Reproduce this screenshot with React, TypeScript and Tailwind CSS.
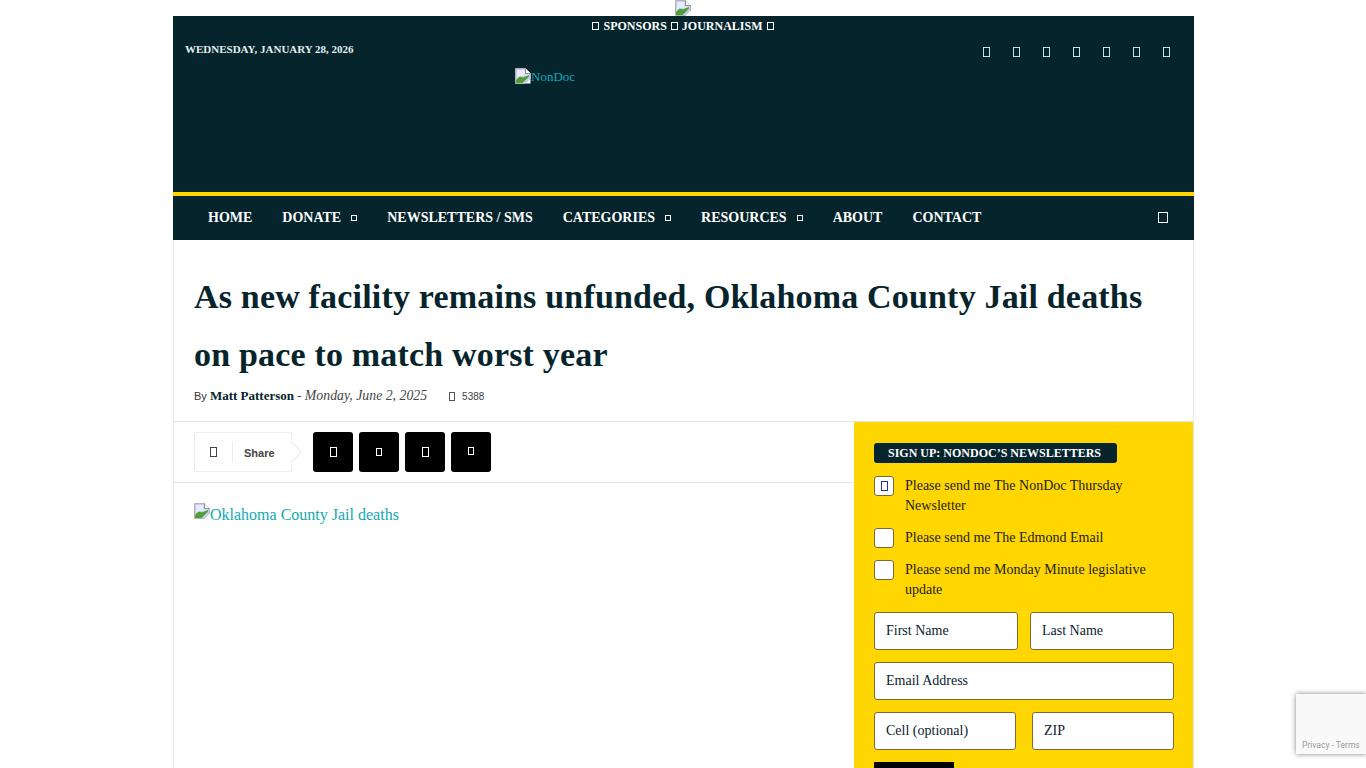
// icon fonts never loaded in the reference, so every icon is an empty box
const Tofu = ({ className = '' }: { className?: string }) => <span className={`inline-block shrink-0 border border-current ${className}`} />;

// the browser's broken-image picture
const BrokenImage = () => (
  <svg width="16" height="16" viewBox="0 0 16 16" className="inline-block shrink-0 align-baseline">
    <path d="M0.5 0.5H10.5L15.5 5.5V10.5L10.5 15.5H0.5Z" fill="#c3cbf0" stroke="#b4b4b4" />
    <path d="M2 2H9.5V6.5H14V7.5L7 8L2 10Z" fill="#e8ebfb" />
    <path d="M10.5 0.5V5.5H15.5" fill="#fff" stroke="#8f8f8f" />
    <path d="M1 15V12L4.5 8.5L8 9.5L14 7V8.5L7.5 15Z" fill="#4f9f32" />
    <path d="M10.5 15.5L15.5 10.5V15.5Z" fill="#fff" />
  </svg>
);

const navItems = [
  { label: 'HOME' },
  { label: 'DONATE', caret: true },
  { label: 'NEWSLETTERS / SMS' },
  { label: 'CATEGORIES', caret: true },
  { label: 'RESOURCES', caret: true },
  { label: 'ABOUT' },
  { label: 'CONTACT' },
];

const checks = [
  { label: 'Please send me The NonDoc Thursday Newsletter', checked: true },
  { label: 'Please send me The Edmond Email' },
  { label: 'Please send me Monday Minute legislative update' },
];

const shareIcons = [
  'h-[10px] w-[7px]',
  'h-[8px] w-[6px]',
  'h-[10px] w-[7px]',
  'mb-[3px] h-[8px] w-[6px]',
];

const Field = ({ label, className = '' }: { label: string; className?: string }) => (
  <div className={`flex h-[38px] items-center rounded-[3px] border border-[#7d6a35] bg-white px-[11px] text-[14px] text-[#0b1a30] ${className}`}>
    {label}
  </div>
);

export default function App() {
  return (
    <div className="relative h-screen overflow-hidden bg-white font-['Liberation_Serif',serif]">
      <div className="ml-[173px] w-[1021px]">
        <div className="flex h-4 justify-center overflow-hidden pr-px">
          <BrokenImage />
        </div>

        <header className="h-[176px] bg-[#05242c] text-white">
          <div className="flex h-[20px] items-center justify-center gap-[4px] pr-px text-[12px] font-bold">
            <Tofu className="h-[8px] w-[7px]" />
            <span>SPONSORS</span>
            <Tofu className="h-[8px] w-[7px]" />
            <span>JOURNALISM</span>
            <Tofu className="h-[8px] w-[7px]" />
          </div>
          <div className="flex items-start pl-3">
            <div className="w-[330px] pt-[5px] text-[11px] leading-[16px] font-bold text-[#e4eef0]">WEDNESDAY, JANUARY 28, 2026</div>
            <div className="flex pt-[32px] text-[13px] leading-[16px] text-[#12a9b5]">
              <BrokenImage />
              <span className="pt-[1px]">NonDoc</span>
            </div>
            <div className="ml-auto flex gap-[23px] pt-[11px] pr-[24px] text-[#cfe0e3]">
              {[0, 1, 2, 3, 4, 5, 6].map((i) => (
                <Tofu key={i} className="h-[10px] w-[7px]" />
              ))}
            </div>
          </div>
        </header>

        <nav className="flex h-[48px] items-center border-t-4 border-[#ffd600] bg-[#05242c] pr-[26px] pl-[35px] text-white">
          <ul className="flex gap-[30px] pb-[2px] text-[14px] font-bold">
            {navItems.map((item) => (
              <li key={item.label} className="flex items-center">
                {item.label}
                {item.caret && <Tofu className="mt-[2px] ml-[10px] h-[6px] w-[6px]" />}
              </li>
            ))}
          </ul>
          <Tofu className="mb-px ml-auto h-[11px] w-[10px]" />
        </nav>

        <main className="border-x border-[#e7e7e7]">
          <div className="border-b border-[#e7e7e7] px-5 pt-[28px] pb-[15px]">
            <h1 className="text-[34px] leading-[58px] font-bold tracking-[0.18px] text-[#05242c]">
              As new facility remains unfunded, Oklahoma County Jail deaths on pace to match worst year
            </h1>
            <div className="mt-[2px] flex h-[20px] items-center text-[13px] text-[#333]">
              <span className="font-['Liberation_Sans',sans-serif] text-[11px]">By&nbsp;</span>
              <span className="font-bold text-[#05242c]">Matt Patterson</span>
              <span>&nbsp;-&nbsp;</span>
              <span className="text-[13.8px] text-[#444] italic">Monday, June 2, 2025</span>
              <Tofu className="ml-[22px] h-[9px] w-[6px] text-[#555]" />
              <span className="ml-[7px] font-['Liberation_Sans',sans-serif] text-[10px] text-[#444]">5388</span>
            </div>
          </div>

          <div className="flex">
            <div className="w-[680px]">
              <div className="flex h-[61px] items-start gap-[21px] border-b border-[#e7e7e7] px-5 pt-[10px]">
                <div className="relative flex h-[40px] w-[98px] items-center rounded-[2px] border border-[#ececec] font-['Liberation_Sans',sans-serif] text-[11px] font-bold text-[#444]">
                  <span className="flex w-[38px] justify-center border-r border-[#ececec] py-[5px]">
                    <Tofu className="h-[10px] w-[7px]" />
                  </span>
                  <span className="pt-[2px] pl-[11px]">Share</span>
                  <span className="absolute top-[12px] right-[-8px] h-[14px] w-[14px] rotate-45 border-t border-r border-[#ececec] bg-white" />
                </div>
                <div className="flex gap-[6px] text-white">
                  {shareIcons.map((size, i) => (
                    <div key={i} className="flex h-[40px] w-[40px] items-center justify-center rounded-[3px] bg-black">
                      <Tofu className={size} />
                    </div>
                  ))}
                </div>
              </div>
              <div className="flex px-5 pt-5 text-[16px] leading-[16px] text-[#12a9b5]">
                <BrokenImage />
                <span className="pt-[4px]">Oklahoma County Jail deaths</span>
              </div>
            </div>

            <aside className="h-[400px] flex-1 bg-[#ffd600] pt-[21px] pr-[19px] pl-5 text-[14px] leading-[20px] text-[#1b1d16]">
              <h3 className="flex h-[20px] w-[243px] items-center rounded-[3px] bg-[#05242c] pl-[14px] text-[12px] font-bold text-white">
                SIGN UP: NONDOC’S NEWSLETTERS
              </h3>
              <div className="mt-[13px] flex flex-col gap-[12px]">
                {checks.map((c) => (
                  <label key={c.label} className="flex gap-[11px]">
                    <span className="flex h-5 w-5 shrink-0 items-center justify-center rounded-[3px] border border-[#7d6a35] bg-white text-[#2633a8]">
                      {c.checked && <Tofu className="h-[10px] w-[7px]" />}
                    </span>
                    <span>{c.label}</span>
                  </label>
                ))}
              </div>
              <div className="mt-3 flex flex-col gap-3">
                <div className="flex gap-3">
                  <Field label="First Name" className="w-[144px]" />
                  <Field label="Last Name" className="flex-1" />
                </div>
                <Field label="Email Address" />
                <div className="flex gap-4">
                  <Field label="Cell (optional)" className="w-[142px]" />
                  <Field label="ZIP" className="flex-1" />
                </div>
                <div className="h-[38px] w-[80px] bg-black" />
              </div>
            </aside>
          </div>
        </main>
      </div>

      <div className="absolute top-[694px] right-0 flex h-[60px] w-[70px] items-end bg-[#f9f9f9] pb-[4px] pl-[6px] font-['Roboto',sans-serif] text-[8.5px] leading-[10px] whitespace-nowrap text-[#999] shadow-[0_0_5px_#808080]">
        Privacy - Terms
      </div>
    </div>
  );
}
